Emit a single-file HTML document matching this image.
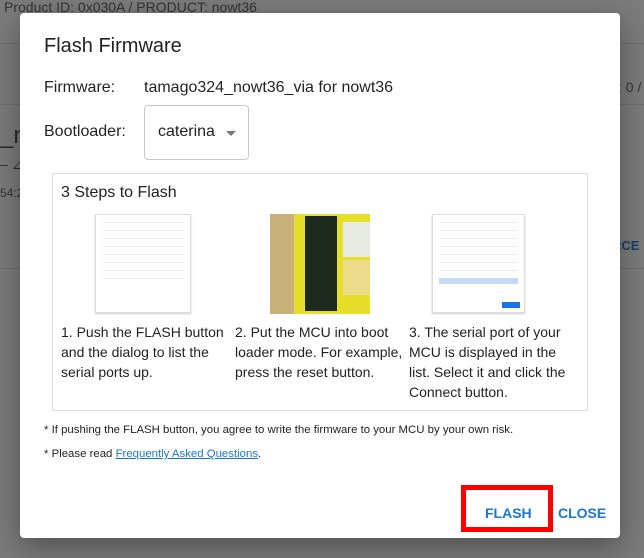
<!DOCTYPE html>
<html><head><style>
*{margin:0;padding:0;box-sizing:border-box}
body{width:644px;height:558px;overflow:hidden;background:#7b7b7b;font-family:"Liberation Sans",sans-serif;position:relative;color:rgba(0,0,0,.87)}
.bg{position:absolute;color:#2a2a2a}
.ln{position:absolute;height:1px;background:#6e6e6e}
.dlg{position:absolute;left:20px;top:13px;width:600px;height:525px;background:#fff;border-radius:4px;box-shadow:0 10px 30px rgba(0,0,0,.35)}
.a{position:absolute;white-space:nowrap}
.shot{position:absolute;background:#fff;border:1px solid #ddd;box-shadow:0 1px 2px rgba(0,0,0,.2)}
.shot i{display:block;height:1px;background:#eee;margin:7px 6px 0 6px}
.t{position:absolute;font-size:14px;line-height:20px;color:#222}
</style></head><body>
<div class="bg" style="left:4px;top:-1px;font-size:14px;color:#333">Product ID: 0x030A / PRODUCT: nowt36</div>
<div class="ln" style="left:0;top:43px;width:644px"></div>
<div class="ln" style="left:0;top:104px;width:644px"></div>
<div class="ln" style="left:0;top:268px;width:644px"></div>
<div class="bg" style="left:0;top:122px;font-size:24px">_n</div>
<div class="bg" style="left:0;top:156px;font-size:14px">– ⊿</div>
<div class="bg" style="left:0;top:186px;font-size:12px;color:#333">54:2</div>
<div class="bg" style="left:618px;top:79px;font-size:14px;color:#333">: 0 /</div>
<div class="bg" style="left:612px;top:238px;font-size:13px;font-weight:bold;color:#1a3f66">RCE</div>
<div class="dlg">
<div class="a" style="left:24px;top:22px;font-size:20px;font-weight:500">Flash Firmware</div>
<div class="a" style="left:24px;top:66px;font-size:16px">Firmware:</div>
<div class="a" style="left:124px;top:66px;font-size:16px">tamago324_nowt36_via for nowt36</div>
<div class="a" style="left:24px;top:110px;font-size:16px">Bootloader:</div>
<div class="a" style="left:124px;top:92px;width:105px;height:55px;border:1px solid #c8c8c8;border-radius:4px"></div>
<div class="a" style="left:138px;top:110px;font-size:16px">caterina</div>
<div class="a" style="left:206px;top:118px;width:0;height:0;border-left:5px solid transparent;border-right:5px solid transparent;border-top:5px solid #777"></div>
<div class="a" style="left:32px;top:160px;width:536px;height:238px;border:1px solid #ddd"></div>
<div class="a" style="left:41px;top:171px;font-size:16px;color:#222">3 Steps to Flash</div>
<div class="shot" style="left:75px;top:201px;width:96px;height:99px"><i></i><i></i><i></i><i></i><i></i><i></i><i></i><i></i></div>
<div class="a" style="left:250px;top:201px;width:100px;height:100px;background:#c9b07a">
 <div style="position:absolute;left:24px;top:0;width:76px;height:100px;background:#e5de2a"></div>
 <div style="position:absolute;left:35px;top:2px;width:32px;height:95px;background:#1f2a1e"></div>
 <div style="position:absolute;left:73px;top:8px;width:27px;height:35px;background:#e8eae4"></div>
 <div style="position:absolute;left:73px;top:46px;width:27px;height:35px;background:#ecdc8a"></div>
</div>
<div class="shot" style="left:412px;top:201px;width:93px;height:99px"><i></i><i></i><i></i><i></i><i></i><i></i><i></i><i style="height:6px;background:#c5d9f5"></i><div style="position:absolute;right:4px;bottom:4px;width:18px;height:6px;background:#1a73e8"></div></div>
<div class="t" style="left:41px;top:309px;width:170px">1. Push the FLASH button and the dialog to list the serial ports up.</div>
<div class="t" style="left:215px;top:309px;width:172px">2. Put the MCU into boot loader mode. For example, press the reset button.</div>
<div class="t" style="left:389px;top:309px;width:162px">3. The serial port of your MCU is displayed in the list. Select it and click the Connect button.</div>
<div class="a" style="left:24px;top:411px;font-size:11.4px;color:#222">* If pushing the FLASH button, you agree to write the firmware to your MCU by your own risk.</div>
<div class="a" style="left:24px;top:435px;font-size:11.4px;color:#222">* Please read <span style="color:#1976d2;text-decoration:underline">Frequently Asked Questions</span>.</div>
<div class="a" style="left:441px;top:472px;width:92px;height:47px;border:5px solid #f00"></div>
<div class="a" style="left:465px;top:492px;font-size:14px;font-weight:bold;color:#1976d2">FLASH</div>
<div class="a" style="left:538px;top:492px;font-size:14px;font-weight:bold;color:#1976d2">CLOSE</div>
</div>
</body></html>
